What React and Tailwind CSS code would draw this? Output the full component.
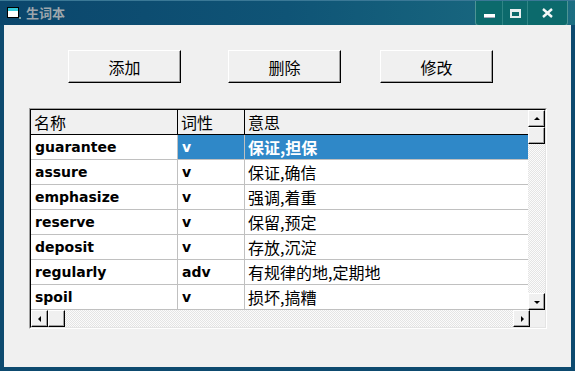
import React from 'react';

const rows = [
  { word: 'guarantee', pos: 'v', meaning: '保证,担保', selected: true },
  { word: 'assure', pos: 'v', meaning: '保证,确信' },
  { word: 'emphasize', pos: 'v', meaning: '强调,着重' },
  { word: 'reserve', pos: 'v', meaning: '保留,预定' },
  { word: 'deposit', pos: 'v', meaning: '存放,沉淀' },
  { word: 'regularly', pos: 'adv', meaning: '有规律的地,定期地' },
  { word: 'spoil', pos: 'v', meaning: '损坏,搞糟' },
];

const cjk = "font-['Noto_Sans_CJK_SC',sans-serif]";
const latin = "font-['DejaVu_Sans','Noto_Sans_CJK_SC',sans-serif]";

function ScrollButton({ dir, className = '' }) {
  const tri = {
    up: '3,7 9,7 6,4',
    down: '3,5 9,5 6,8',
    left: '7,3 7,9 4,6',
    right: '5,3 5,9 8,6',
  }[dir];
  return (
    <div className={`flex items-center justify-center bg-[#f0f0f0] border border-t-white border-l-white border-r-black border-b-black shadow-[inset_-1px_-1px_0_#a0a0a0] ${className}`}>
      <svg width="12" height="12" viewBox="0 0 12 12">
        <polygon points={tri} fill="#000" />
      </svg>
    </div>
  );
}

function Thumb({ className = '' }) {
  return (
    <div className={`bg-[#f0f0f0] border border-t-white border-l-white border-r-black border-b-black shadow-[inset_-1px_-1px_0_#a0a0a0] ${className}`} />
  );
}

const track = 'bg-[#f3f3f3] bg-[image:repeating-conic-gradient(#e4e4e4_0_25%,#fbfbfb_0_50%)] bg-[length:2px_2px]';

function Button({ children, className = '' }) {
  return (
    <button className={`w-[113px] h-[33px] bg-[#f0f0f0] border border-t-white border-l-white border-r-black border-b-black shadow-[inset_-1px_-1px_0_#a0a0a0] text-[16px] text-black ${cjk} flex items-center justify-center ${className}`}>
      {children}
    </button>
  );
}

export default function App() {
  return (
    <div className="w-[575px] h-[371px] bg-[#0d4a6f] flex flex-col overflow-hidden">
      {/* title bar */}
      <div className="h-[25px] flex items-center bg-gradient-to-r from-[#0b466c] via-[#0f5476] to-[#1c6e82] border-t border-[#3a7896]">
        <svg className="ml-[7px]" width="14" height="13" viewBox="0 0 14 13">
          <rect x="0.5" y="0.5" width="11" height="10" fill="#fff" stroke="#000" />
          <rect x="1" y="1" width="10" height="3" fill="#33c8d8" />
          <rect x="12" y="10" width="2" height="2" fill="#8aa" />
        </svg>
        <span className={`ml-[5px] text-[13px] font-bold text-[#9ea6ac] ${cjk}`}>生词本</span>
        <div className="ml-auto mr-[7px] self-start h-[25px] flex bg-[#0c6a6c] border border-t-0 border-[#4e9494] rounded-b-[4px]">
          <div className="w-[27px] flex items-center justify-center border-r border-[#2f8585]">
            <div className="w-[11px] h-[4px] bg-white mt-[6px] border-b border-[#aab]" />
          </div>
          <div className="w-[25px] flex items-center justify-center border-r border-[#2f8585]">
            <div className="w-[11px] h-[9px] border-2 border-t-[3px] border-[#e8eef0]" />
          </div>
          <div className="w-[39px] flex items-center justify-center">
            <svg width="11" height="10" viewBox="0 0 11 10">
              <path d="M1 1 L10 9 M10 1 L1 9" stroke="#f4f8f8" strokeWidth="2.4" />
            </svg>
          </div>
        </div>
      </div>

      {/* client area */}
      <div className="flex-1 mx-[4px] mb-[4px] bg-[#f0f0f0] flex flex-col">
        <div className="flex mt-[25px] ml-[64px]">
          <Button>添加</Button>
          <Button className="ml-[47px]">删除</Button>
          <Button className="ml-[39px]">修改</Button>
        </div>

        <div className="mt-[25px] ml-[25px] w-[518px] h-[221px] border border-t-[#a0a0a0] border-l-[#a0a0a0] border-r-white border-b-white">
          <div className="w-full h-full border border-t-black border-l-black border-r-[#e4e4e4] border-b-[#e4e4e4] flex flex-col bg-[#f0f0f0]">
            <div className="flex">
              {/* grid */}
              <div className="w-[499px] flex flex-col">
                <div className="h-[25px] flex bg-[#f0f0f0] border-b border-black text-[16px] text-black">
                  <div className={`w-[147px] pl-[3px] flex items-center border-r border-black ${cjk}`}>名称</div>
                  <div className={`w-[67px] pl-[3px] flex items-center border-r border-black ${cjk}`}>词性</div>
                  <div className={`flex-1 pl-[3px] flex items-center ${cjk}`}>意思</div>
                </div>
                {rows.map((r) => (
                  <div key={r.word} className="h-[25px] flex bg-white border-b border-[#c0c0c0]">
                    <div className={`w-[147px] pl-[4px] flex items-center border-r border-[#c0c0c0] text-[14px] font-bold text-black ${latin}`}>{r.word}</div>
                    <div className={`w-[67px] pl-[4px] flex items-center border-r border-[#c0c0c0] text-[14px] font-bold ${latin} ${r.selected ? 'bg-[#2f88c8] text-white' : 'text-black'}`}>{r.pos}</div>
                    <div className={`flex-1 pl-[3px] flex items-center text-[16px] ${cjk} ${r.selected ? 'bg-[#2f88c8] text-white font-bold' : 'text-black'}`}>{r.meaning}</div>
                  </div>
                ))}
              </div>
              {/* vertical scrollbar */}
              <div className={`w-[17px] flex flex-col ${track}`}>
                <ScrollButton dir="up" className="h-[17px]" />
                <Thumb className="h-[17px]" />
                <div className="flex-1" />
                <ScrollButton dir="down" className="h-[17px]" />
              </div>
            </div>
            {/* horizontal scrollbar */}
            <div className="flex h-[17px]">
              <div className={`w-[499px] flex ${track}`}>
                <ScrollButton dir="left" className="w-[17px]" />
                <Thumb className="w-[17px]" />
                <div className="flex-1" />
                <ScrollButton dir="right" className="w-[17px]" />
              </div>
              <div className="flex-1 bg-[#f0f0f0]" />
            </div>
          </div>
        </div>
      </div>
    </div>
  );
}
